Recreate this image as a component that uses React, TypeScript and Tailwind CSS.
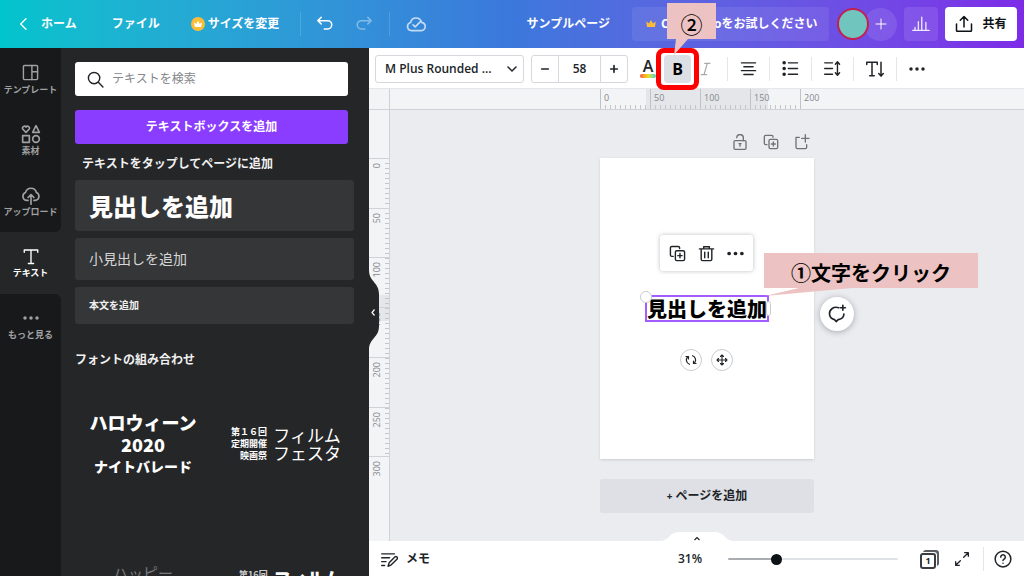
import React from 'react';

const JP = "[font-family:'Open_Sans','Noto_Sans_CJK_JP',sans-serif]";
const JP_DISPLAY = "[font-family:'Noto_Sans_CJK_JP',sans-serif]";

interface IconProps {
  /** Size and color classes */
  className?: string;
  strokeWidth?: number;
  children: React.ReactNode;
}

/**
 * Line icon on a 24x24 grid
 */
const Icon: React.FC<IconProps> = ({ className = 'size-4', strokeWidth = 2, children }) => (
  <svg
    viewBox="0 0 24 24"
    fill="none"
    stroke="currentColor"
    strokeWidth={strokeWidth}
    strokeLinecap="round"
    strokeLinejoin="round"
    aria-hidden="true"
    className={`shrink-0 ${className}`}
  >
    {children}
  </svg>
);

const CROWN = 'M4 18 L2.5 7 L8 11 L12 4 L16 11 L21.5 7 L20 18 Z';

const DuplicateIcon: React.FC<{ className?: string }> = ({ className }) => (
  <Icon className={className}>
    <path d="M6 16H4a2 2 0 0 1-2-2V4a2 2 0 0 1 2-2h9a2 2 0 0 1 2 2v1" />
    <rect x="9" y="8" width="13" height="14" rx="2" />
    <path d="M15.500 12v6M12.500 15h6" />
  </Icon>
);

const DotsIcon: React.FC<{ className?: string }> = ({ className }) => (
  <Icon className={className}>
    <g fill="currentColor" stroke="none">
      <circle cx="3" cy="12" r="2.600" />
      <circle cx="12" cy="12" r="2.600" />
      <circle cx="21" cy="12" r="2.600" />
    </g>
  </Icon>
);

const Header: React.FC = () => (
  <header className="flex h-12 shrink-0 items-center bg-linear-to-r from-[#00c4cc] via-[#3b78dc] to-[#7d2ae8] pr-[7px] pl-4 text-xs font-bold text-white">
    <button type="button" className="mr-[35px] flex items-center gap-[9px] whitespace-nowrap">
      <Icon className="size-4">
        <path d="M15 4 7 12l8 8" />
      </Icon>
      ホーム
    </button>
    <button type="button" className="mr-[31px] whitespace-nowrap">ファイル</button>
    <button type="button" className="flex items-center gap-[3px] whitespace-nowrap">
      <svg viewBox="0 0 24 24" className="size-[14px]" aria-hidden="true">
        <circle cx="12" cy="12" r="12" fill="#fdbc35" />
        <path d="M6.500 17 5 9l4 3 3-6 3 6 4-3-1.500 8Z" fill="#fff" />
      </svg>
      サイズを変更
    </button>
    <span className="mr-[15px] ml-[21px] h-6 w-px bg-white/15" />
    <button type="button" aria-label="元に戻す">
      <Icon className="size-[18px]">
        <path d="M7 3 2.500 7.500 7 12M3 7.500h12.500a5.500 5.500 0 0 1 0 11H11" />
      </Icon>
    </button>
    <button type="button" aria-label="やり直す" className="ml-[21px] text-white/40">
      <Icon className="size-[18px]">
        <path d="m17 3 4.500 4.500L17 12M21 7.500H8.500a5.500 5.500 0 0 0 0 11H13" />
      </Icon>
    </button>
    <span className="mr-4 ml-4 h-6 w-px bg-white/15" />
    <button type="button" aria-label="保存済み" className="text-white/70">
      <Icon className="size-5">
        <path d="M6.500 20a5 5 0 0 1-1-9.800A6.700 6.700 0 0 1 18.600 10 5 5 0 0 1 17.500 20Z" />
        <path d="m8.500 13 2.500 2.500 6-6" />
      </Icon>
    </button>

    <span className="mr-[22px] ml-auto whitespace-nowrap">サンプルページ</span>
    <button
      type="button"
      className="flex h-[34px] w-[197px] items-center gap-[4px] rounded-sm bg-white/8 pl-[13px] whitespace-nowrap"
    >
      <svg viewBox="0 0 24 24" className="size-3 shrink-0" aria-hidden="true">
        <path d={CROWN} fill="#fdbc35" />
      </svg>
      Canva Proをお試しください
    </button>
    <div className="ml-2 flex items-center">
      <span className="z-10 size-8 rounded-full border-2 border-[#c41f4f] bg-[#70c5be]" />
      <button
        type="button"
        aria-label="メンバーを追加"
        className="-ml-[5px] flex size-[33px] items-center justify-center rounded-full bg-white/10"
      >
        <Icon className="size-3">
          <path d="M12 2v20M2 12h20" />
        </Icon>
      </button>
    </div>
    <button
      type="button"
      aria-label="インサイト"
      className="ml-[7px] flex size-[34px] items-center justify-center rounded-sm bg-white/10 text-white/85"
    >
      <Icon className="size-[18px]" strokeWidth={1.8}>
        <path d="M1 20.500h22M4 20v-3.500M8.500 20V9M13 20V3M18.500 20v-10" />
      </Icon>
    </button>
    <button
      type="button"
      className="ml-[7px] flex h-[34px] w-[72px] items-center justify-center gap-[9px] rounded-sm bg-white text-[#0d1216]"
    >
      <Icon className="size-[18px]">
        <path d="M2 12v8.500a1 1 0 0 0 1 1h18a1 1 0 0 0 1-1V12M12 16V3M7 7 12 2l5 5" />
      </Icon>
      共有
    </button>
  </header>
);

const railItems = [
  {
    label: 'テンプレート',
    icon: (
      <Icon className="size-[17px]">
        <rect x="2" y="2" width="20" height="20" rx="1.500" />
        <path d="M14 2v20M14 11h8" />
      </Icon>
    ),
  },
  {
    label: '素材',
    icon: (
      <Icon className="size-5">
        <path d="M6 10 2.300 6.300a2.200 2.200 0 0 1 3.700-2.600 2.200 2.200 0 0 1 3.700 2.600ZM18 2l4 8h-8Z" />
        <rect x="2" y="14" width="8" height="8" />
        <circle cx="18" cy="18" r="4" />
      </Icon>
    ),
  },
  {
    label: 'アップロード',
    icon: (
      <Icon className="size-5">
        <path d="M8.500 18.500h-2a5 5 0 0 1-1-9.600A6.700 6.700 0 0 1 18.500 9a5 5 0 0 1-1 9.500h-2" />
        <path d="M12 23V12M8.500 15 12 11.500l3.500 3.500" />
      </Icon>
    ),
  },
  {
    label: 'テキスト',
    icon: (
      <Icon className="size-[18px]" strokeWidth={1.8}>
        <path d="M3 7V4h18v3M12 4v18M8.500 22h7" />
      </Icon>
    ),
  },
  { label: 'もっと見る', icon: <DotsIcon className="size-4" /> },
];

const RailButton: React.FC<{ item: (typeof railItems)[number]; active?: boolean }> = ({ item, active }) => (
  <button
    type="button"
    className={`flex w-full shrink-0 flex-col items-center justify-center text-[9px] leading-[14px] font-bold whitespace-nowrap ${
      active ? 'h-[62px] text-white' : 'h-[61px] text-[#a0a1a3]'
    }`}
  >
    <span className="flex h-5 items-center">{item.icon}</span>
    {item.label}
  </button>
);

const Rail: React.FC = () => (
  <nav className="flex w-[61px] shrink-0 flex-col bg-[#252627]">
    <div className="rounded-br-md bg-[#18191b] pt-px">
      {railItems.slice(0, 3).map((item) => (
        <RailButton key={item.label} item={item} />
      ))}
    </div>
    <RailButton item={railItems[3]} active />
    <div className="flex-1 rounded-tr-md bg-[#18191b]">
      <RailButton item={railItems[4]} />
    </div>
  </nav>
);

const TextPanel: React.FC = () => (
  <aside className="relative z-10 flex w-[308px] shrink-0 flex-col bg-[#252627] pt-[14px] pl-[14px] text-[#f0f0f1]">
    <label className="mr-[21px] flex h-[34px] shrink-0 items-center gap-2 rounded-[3px] bg-white pl-3">
      <Icon className="size-[17px] text-[#202428]">
        <circle cx="10" cy="10" r="8" />
        <path d="m16 16 6.500 6.500" />
      </Icon>
      <input
        type="text"
        aria-label="テキストを検索"
        placeholder="テキストを検索"
        className="w-full bg-transparent text-xs text-gray-700 outline-none placeholder:text-[#85888c]"
      />
    </label>
    <button
      type="button"
      className="mt-[14px] mr-[21px] h-[34px] shrink-0 rounded-[3px] bg-[#8b3dff] text-xs font-bold text-white"
    >
      テキストボックスを追加
    </button>
    <h2 className="mt-3 mb-2 ml-[7px] text-xs leading-4 font-bold">テキストをタップしてページに追加</h2>

    <div className="mr-[15px] flex flex-col gap-[7px] text-left">
      <button
        type="button"
        className={`h-[51px] rounded-[3px] bg-[#353637] pl-[14px] text-left text-2xl font-black text-white ${JP_DISPLAY}`}
      >
        見出しを追加
      </button>
      <button type="button" className="h-[42px] rounded-[3px] bg-[#353637] pl-[14px] text-left text-sm text-[#d6d6d7]">
        小見出しを追加
      </button>
      <button type="button" className="h-[37px] rounded-[3px] bg-[#353637] pl-[14px] text-left text-[10px] font-bold">
        本文を追加
      </button>
    </div>

    <h2 className="mt-7 text-xs leading-4 font-bold">フォントの組み合わせ</h2>

    <div className={`mt-[43px] grid grid-cols-[136px_130px] gap-y-[77px] text-white ${JP_DISPLAY}`}>
      <button type="button" className="flex flex-col items-center text-lg leading-[22px] font-black whitespace-nowrap">
        <span>ハロウィーン</span>
        <span>2020</span>
        <span className="text-sm leading-[22px]">ナイトバレード</span>
      </button>
      <button type="button" className="flex items-center justify-end gap-[6px] whitespace-nowrap">
        <span className="text-right text-[9px] leading-[12px] font-bold">
          第１６回
          <br />
          定期開催
          <br />
          映画祭
        </span>
        <span className="text-[17px] leading-[18px]">
          フィルム
          <br />
          フェスタ
        </span>
      </button>
      <button type="button" className="flex justify-center pt-2 text-[15px] leading-[22px] text-[#77787a]">
        ハッピー
      </button>
      <button type="button" className="flex items-start justify-end gap-[6px] pt-[15px] whitespace-nowrap">
        <span className="text-[9px] leading-[12px] font-bold text-[#c8c8c9]">第16回</span>
        <span className="text-[17px] leading-[18px] font-black">フィルム</span>
      </button>
    </div>

    <button type="button" aria-label="パネルを閉じる" className="absolute top-[222px] left-full h-20 w-[10px] text-white">
      <svg viewBox="0 0 10 80" className="h-20 w-[10px]" aria-hidden="true">
        <path d="M0 0C0 12 10 12 10 24V56C10 68 0 68 0 80Z" fill="#252627" />
        <path d="M5.500 39.500 3 42.500l2.500 3" fill="none" stroke="currentColor" strokeWidth="1.200" />
      </svg>
    </button>
  </aside>
);

const Divider: React.FC = () => <span className="h-6 w-px bg-[#e4e6e9]" />;

const Toolbar: React.FC = () => (
  <div className="relative z-20 flex h-10 shrink-0 items-center bg-white pt-px pl-[6px] text-xs font-semibold text-[#202428]">
    <div className="relative">
      <select
        aria-label="フォント"
        className="h-7 w-[149px] appearance-none rounded-[3px] border border-[#d5d8dc] bg-white pl-[9px]"
      >
        <option>M Plus Rounded ...</option>
      </select>
      <Icon className="pointer-events-none absolute top-2 right-[6px] size-3" strokeWidth={3}>
        <path d="m4 8 8 8 8-8" />
      </Icon>
    </div>
    <div className="ml-[7px] flex h-7 w-[97px] rounded-[3px] border border-[#d5d8dc]">
      <button type="button" aria-label="小さく" className="flex flex-1 items-center justify-center">
        <Icon className="size-[10px]" strokeWidth={4}>
          <path d="M4 12h16" />
        </Icon>
      </button>
      <input
        type="text"
        aria-label="フォントサイズ"
        defaultValue="58"
        className="w-[43px] border-x border-[#d5d8dc] text-center outline-none"
      />
      <button type="button" aria-label="大きく" className="flex flex-1 items-center justify-center">
        <Icon className="size-[10px]" strokeWidth={4}>
          <path d="M4 12h16M12 4v16" />
        </Icon>
      </button>
    </div>
    <button type="button" aria-label="テキストの色" className="ml-3 flex w-4 flex-col items-center">
      <span className="text-base leading-[15px] font-semibold">A</span>
      <span className="h-1 w-4 rounded-full bg-linear-to-r from-[#ff4b3e] via-[#e6e000] to-[#35d0b8]" />
    </button>
    <div className="relative ml-2">
      <button type="button" className="h-7 w-[27px] rounded-sm bg-[#dcdfe3] text-base leading-7 font-bold text-black">
        B
      </button>
      <span className="pointer-events-none absolute -inset-x-2 -inset-y-[7px] rounded-lg border-[5px] border-[#ff0000]" />
      {/* Step 2 callout */}
      <div className="pointer-events-none absolute -top-[52px] left-[3px] h-9 w-[49px] bg-[#ecc2c2]">
        <span className={`block text-center text-[22px] leading-10 font-medium text-black ${JP_DISPLAY}`}>②</span>
        <svg viewBox="0 0 20 16" className="absolute top-full left-[4px] h-4 w-5" aria-hidden="true">
          <path d="M5 0H17L3 16Z" fill="#ecc2c2" />
        </svg>
      </div>
    </div>
    <button type="button" aria-label="斜体" className="ml-[7px] text-[#a6a9ad]">
      <Icon className="size-4" strokeWidth={1.8}>
        <path d="M10 3.500h8M5 20.500h8M14 3.500 9 20.500" />
      </Icon>
    </button>
    <div className="ml-[13px] flex items-center gap-3">
      <Divider />
      <button type="button" aria-label="配置">
        <Icon className="size-[17px]">
          <path d="M2 4h20M5.500 9.500h13M2 15h20M5.500 20.500h13" />
        </Icon>
      </button>
      <Divider />
      <button type="button" aria-label="リスト">
        <Icon className="size-[17px]">
          <path d="M9 4h13M9 12h13M9 20h13" />
          <path d="M3 4h.1M3 12h.1M3 20h.1" strokeWidth="5" />
        </Icon>
      </button>
      <Divider />
      <button type="button" aria-label="間隔">
        <Icon className="size-[17px]">
          <path d="M1 4h11M1 12h11M1 20h11M19 3v18M16 6l3-3.500L22 6M16 18l3 3.500 3-3.500" />
        </Icon>
      </button>
      <Divider />
      <button type="button" aria-label="縦書き">
        <Icon className="size-[18px]">
          <path d="M1 6V3h14v3M8 3v18M5 21h6M20 3v18M17 18l3 3.500 3-3.500" />
        </Icon>
      </button>
      <Divider />
      <button type="button" aria-label="その他">
        <DotsIcon className="size-4" />
      </button>
    </div>
  </div>
);

const horizontalMarks = [0, 50, 100, 150, 200];
const verticalMarks = [0, 50, 100, 150, 200, 250, 300];

const HorizontalRuler: React.FC = () => (
  <div className="flex h-[22px] shrink-0 border-y border-t-[#e4e6e9] border-b-[#cfd2d6] bg-[#f3f4f6] text-[9px] leading-none text-[#85888c]">
    <span className="w-[21px] shrink-0 border-r border-[#cfd2d6]" />
    <div className="flex flex-1 justify-center">
      <div className="relative flex w-[214px]">
        <span className="absolute inset-y-0 left-[46px] w-[122px] bg-[#e4e6e9]" />
        <span className="absolute bottom-0 left-0 h-[4px] w-[199px] bg-[repeating-linear-gradient(to_right,#c3c6ca_0_1px,transparent_1px_5px)]" />
        {horizontalMarks.map((mark) => (
          <span key={mark} className="relative w-[50px] shrink-0 border-l border-[#bfc3c7] pt-1 pl-[3px]">
            {mark}
          </span>
        ))}
      </div>
    </div>
  </div>
);

const VerticalRuler: React.FC = () => (
  <div className="w-[21px] shrink-0 border-r border-[#cfd2d6] bg-[#f3f4f6] pt-12 text-[9px] leading-none text-[#85888c]">
    <div className="relative flex h-[348px] flex-col">
      <span className="absolute inset-x-0 top-[137px] h-[26px] bg-[#e4e6e9]" />
      <span className="absolute top-0 right-0 h-[298px] w-[4px] bg-[repeating-linear-gradient(to_bottom,#c3c6ca_0_1px,transparent_1px_5px)]" />
      {verticalMarks.map((mark) => (
        <span key={mark} className="relative flex flex-1 border-t border-[#cfd2d6] pt-1 pl-[3px]">
          <span className="h-fit rotate-180 [writing-mode:vertical-rl]">{mark}</span>
        </span>
      ))}
    </div>
  </div>
);

const CanvasPage: React.FC = () => (
  <div className="relative h-[301px] w-[214px] shrink-0 bg-white shadow-sm">
    <div className="absolute top-[77px] left-[60px] flex h-9 w-[93px] items-center justify-center gap-[12px] rounded-[3px] bg-white text-[#202428] shadow-[0_0_4px_rgba(60,66,75,0.35)]">
      <button type="button" aria-label="複製">
        <DuplicateIcon className="size-[17px]" />
      </button>
      <button type="button" aria-label="削除">
        <Icon className="size-[17px]">
          <path d="M2 5.500h20M8 5V2.500h8V5M4.500 6v14a2 2 0 0 0 2 2h11a2 2 0 0 0 2-2V6M9.500 10v8M14.500 10v8" />
        </Icon>
      </button>
      <button type="button" aria-label="その他">
        <DotsIcon className="size-[17px]" />
      </button>
    </div>

    <div className="absolute top-[137px] left-[45px] h-[27px] w-[124px] border-2 border-[#a25cff]">
      <p className={`text-center text-xl leading-[23px] font-black whitespace-nowrap text-black ${JP_DISPLAY}`}>
        見出しを追加
      </p>
      <span className="absolute -top-[6px] -left-[7px] size-3 rounded-full border border-[#c9ccd1] bg-white" />
      <span className="absolute top-[4px] -right-[4px] h-[15px] w-[5px] rounded-full border border-[#c9ccd1] bg-white" />
    </div>

    <div className="absolute top-[191px] left-[80px] flex gap-[9px] text-[#202428]">
      <button
        type="button"
        aria-label="回転"
        className="flex size-[22px] items-center justify-center rounded-full border border-[#c9ccd1] bg-white"
      >
        <Icon className="size-3" strokeWidth={2.4}>
          <path d="M9 20.500A9 9 0 0 1 5 6M2 5h5v5M15 3.500A9 9 0 0 1 19 18M22 19h-5v-5" />
        </Icon>
      </button>
      <button
        type="button"
        aria-label="移動"
        className="flex size-[22px] items-center justify-center rounded-full border border-[#c9ccd1] bg-white"
      >
        <Icon className="size-3" strokeWidth={2.2}>
          <path d="M12 2v20M2 12h20M9 5l3-3 3 3M9 19l3 3 3-3M5 9l-3 3 3 3M19 9l3 3-3 3" />
        </Icon>
      </button>
    </div>

    <button
      type="button"
      aria-label="コメントを追加"
      className="absolute top-[139px] left-full ml-[6px] flex size-[34px] items-center justify-center rounded-full bg-white text-[#202428] shadow-[0_1px_6px_rgba(60,66,75,0.4)]"
    >
      <Icon className="size-5">
        <path d="M14 4.500C8 2.500 3 6.500 3 11.500c0 4 2.500 6.500 6 7.300L11 21l2.500-2.200c4-.8 6.800-3.300 6.800-6.800M19 1.500v6M16 4.500h6" />
      </Icon>
    </button>

    {/* Step 1 callout */}
    <div className="pointer-events-none absolute top-[95px] left-[164px] h-[35px] w-[214px] bg-[#ecc2c2]">
      <span className={`block text-center text-xl leading-10 font-bold whitespace-nowrap text-black ${JP_DISPLAY}`}>
        ①文字をクリック
      </span>
      <svg viewBox="0 0 90 8" className="absolute top-full left-0 h-2 w-[90px]" aria-hidden="true">
        <path d="M35 0H88L1 8Z" fill="#ecc2c2" />
      </svg>
    </div>
  </div>
);

const Canvas: React.FC = () => (
  <div className="flex min-h-0 flex-1 bg-[#ebecf0]">
    <VerticalRuler />
    <div className="flex min-w-0 flex-1 flex-col items-center pt-6">
      <div className="mb-2 flex w-[214px] justify-end gap-[15px] pr-1 text-[#6f7377]">
        <button type="button" aria-label="ロック">
          <Icon>
            <rect x="3" y="10" width="18" height="13" rx="1.500" />
            <path d="M7 5.500a5 5 0 0 1 10 .5v4M12 14.500v4M10.500 14.500h3" />
          </Icon>
        </button>
        <button type="button" aria-label="ページを複製">
          <DuplicateIcon />
        </button>
        <button type="button" aria-label="新しいページ">
          <Icon>
            <path d="M8 5H3v15a2 2 0 0 0 2 2h12a2 2 0 0 0 2-2v-4M17 1v11M11.500 6.500h11" />
          </Icon>
        </button>
      </div>
      <CanvasPage />
      <button type="button" className="mt-5 h-[34px] w-[214px] shrink-0 rounded-[3px] bg-[#dfe0e5] text-xs font-bold text-[#202428]">
        <span className="text-[10px]">+</span> ページを追加
      </button>
    </div>
  </div>
);

const Footer: React.FC = () => (
  <footer className="relative flex h-[35px] shrink-0 items-center bg-white pt-px pr-3 pl-3 text-xs font-bold text-[#202428]">
    <button type="button" aria-label="ページ一覧を表示" className="absolute bottom-full left-1/2 -ml-9 h-[9px] w-[72px]">
      <svg viewBox="0 0 72 9" className="h-[9px] w-[72px]" aria-hidden="true">
        <path d="M0 9C8 9 8 0 18 0H54C64 0 64 9 72 9Z" fill="#fff" />
        <path d="m33.500 8 2.500-2.500L38.500 8" fill="none" stroke="#202428" strokeWidth="1.200" />
      </svg>
    </button>
    <button type="button" className="mr-auto flex items-center gap-2">
      <Icon className="size-[17px]">
        <path d="M1 4h18M1 9.500h11M1 15h6M1 20.500h4M10 21.500l1.500-5 8-8a1.800 1.800 0 0 1 3 3l-8 8Z" />
      </Icon>
      メモ
    </button>
    <label htmlFor="zoom" className="mr-[26px] font-semibold">
      31%
    </label>
    <input
      id="zoom"
      type="range"
      defaultValue={27}
      className="h-[2px] w-[170px] appearance-none rounded-full bg-[linear-gradient(to_right,#a9adb2_29%,#dfe2e6_29%)] [&::-webkit-slider-thumb]:size-[11px] [&::-webkit-slider-thumb]:appearance-none [&::-webkit-slider-thumb]:rounded-full [&::-webkit-slider-thumb]:bg-[#0d1216]"
    />
    <button type="button" aria-label="ページ" className="ml-5 flex size-5 items-center justify-center">
      <span className="mt-[3px] flex size-4 items-center justify-center rounded-[3px] border-2 border-[#3a3e42] text-[9px] shadow-[1px_-1px_0_#fff,3px_-3px_0_#5a5e62]">
        1
      </span>
    </button>
    <button type="button" aria-label="全画面" className="ml-4">
      <Icon className="size-4">
        <path d="M14.500 9.500l7-7M16 2.500h5.500V8M9.500 14.500l-7 7M2.500 16v5.500H8" />
      </Icon>
    </button>
    <span className="mr-[10px] ml-[13px] h-6 w-px bg-[#e4e6e9]" />
    <button type="button" aria-label="ヘルプ">
      <Icon className="size-[18px]">
        <circle cx="12" cy="12" r="10.500" />
        <path d="M9 9.500a3 3 0 1 1 4.500 2.600c-1 .6-1.500 1-1.500 2M12 17.500v.1" />
      </Icon>
    </button>
  </footer>
);

/**
 * Design editor with the text panel open
 */
const App: React.FC = () => (
  <div className={`flex h-screen flex-col overflow-hidden ${JP}`}>
    <Header />
    <div className="flex min-h-0 flex-1">
      <Rail />
      <TextPanel />
      <main className="flex min-w-0 flex-1 flex-col">
        <Toolbar />
        <HorizontalRuler />
        <Canvas />
        <Footer />
      </main>
    </div>
  </div>
);

export default App;
